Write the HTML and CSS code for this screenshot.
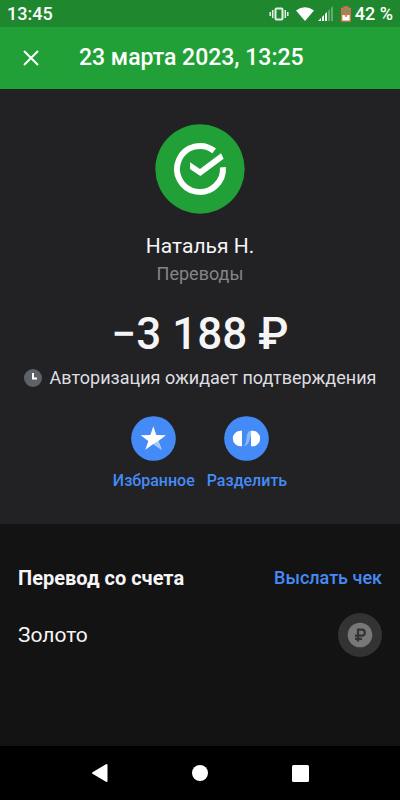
FILE: index.html
```html
<!DOCTYPE html>
<html lang="ru">
<head>
<meta charset="utf-8">
<meta name="viewport" content="width=device-width, initial-scale=1">
<title>23 марта 2023, 13:25</title>
<link rel="stylesheet" href="styles.css">
</head>
<body>
<div class="status">
  <span>13:45</span>
  <div class="status-icons">
    <svg width="20" height="16" viewBox="0 0 20 16" fill="none" stroke="#e6f3e8" stroke-width="1.5"><rect x="6.5" y="2.5" width="7" height="11" rx="1" stroke-width="2"/><path d="M3.7 4v8M16.3 4v8M1.2 6v4M18.8 6v4"/></svg>
    <svg class="wifi" width="18" height="14" viewBox="0 0 18 14"><path d="M0 3.5Q9-3 18 3.5L9 14Z" fill="#fff"/></svg>
    <svg class="signal" width="16" height="16" viewBox="0 0 16 16" fill="#fff"><path d="M0 15l3-3v3zM4 15v-4l2-2v6zM7 15V8l2-2v9z"/><path d="M10 15V5l2-2v12zM13 15V2l2-2v15z" opacity=".3"/></svg>
    <svg class="battery" width="10" height="16" viewBox="0 0 10 16"><path d="M3 .8h4v1.500h2.300v12.900H.7V2.300H3z" fill="#81906a" stroke="#e8683f" stroke-width="1.3"/><path d="M1.400 9h7.200v5.500H1.400z" fill="#fff"/><path d="M5 6v5M2.800 8.500h4.400" stroke="#e8683f" stroke-width="1.5"/></svg>
    <span>42 %</span>
  </div>
</div>
<header class="header">
  <button class="close" aria-label="Закрыть"><svg width="16" height="16" viewBox="0 0 16 16"><path d="M1 1l14 14M15 1L1 15" stroke="#fff" stroke-width="2"/></svg></button>
  <h1>23 марта 2023, 13:25</h1>
</header>
<main>
  <section class="hero">
    <svg class="logo" width="90" height="90" viewBox="30 26 270 270"><circle cx="165" cy="161" r="134" fill="#22a038"/><path d="M233.800 156A69 69 0 1 1 207.500 106.600" fill="none" stroke="#fff" stroke-width="18"/><path d="M135 141L165 161L228 114L236 130L166 182L135 161Z" fill="#fff"/></svg>
    <h2>Наталья Н.</h2>
    <p class="category">Переводы</p>
    <p class="amount">−3 188 ₽</p>
    <p class="state"><svg width="18" height="18" viewBox="0 0 18 18"><circle cx="9" cy="9" r="9" fill="#5e6166"/><path d="M9 4v5.500h4" fill="none" stroke="#fff" stroke-width="2"/></svg>Авторизация ожидает подтверждения</p>
    <div class="actions">
      <button class="action">
        <svg width="45" height="45" viewBox="0 0 135 135"><circle cx="67.500" cy="67.500" r="67" fill="#458bf7"/><path d="M67 31L76 57L105 58L82 75L92 101L67 84L43 101L52 75L29 58L58 57Z" fill="#fff"/><path d="M67 84L82 75L92 101Z" fill="#a2c6fc"/></svg>
        <span>Избранное</span>
      </button>
      <button class="action">
        <svg width="45" height="45" viewBox="0 0 135 135"><circle cx="67.500" cy="67.500" r="67" fill="#458bf7"/><path d="M54 91C76 90 59 44 81 44V60C76 67 78 91 54 91Z" fill="#8bb9fb"/><path d="M54 44V91H50A23.500 23.500 0 0 1 50 44ZM81 44V91H85A23.500 23.500 0 0 0 85 44Z" fill="#fff"/></svg>
        <span>Разделить</span>
      </button>
    </div>
  </section>
  <section class="source">
    <div class="row heading"><h3>Перевод со счета</h3><a href="#receipt">Выслать чек</a></div>
    <div class="row account"><span>Золото</span>
      <svg width="44" height="44" viewBox="0 0 44 44"><circle cx="22" cy="22" r="22" fill="#333"/><circle cx="22" cy="22" r="12.300" fill="#777"/><path d="M20 28.500V16.700h3.800a3 3 0 0 1 0 6H17M17 25.900h7" fill="none" stroke="#333" stroke-width="2.200"/></svg>
    </div>
  </section>
</main>
<nav class="nav">
  <button aria-label="Назад"><svg width="18" height="20" viewBox="0 0 18 20"><path d="M2 10L15.500 2V18Z" fill="#fff" stroke="#fff" stroke-width="2" stroke-linejoin="round"/></svg></button>
  <button aria-label="Домой"><svg width="16" height="16" viewBox="0 0 16 16"><circle cx="8" cy="8" r="8" fill="#fff"/></svg></button>
  <button aria-label="Недавние"><svg width="17" height="17" viewBox="0 0 17 17"><rect width="17" height="17" rx="1.500" fill="#fff"/></svg></button>
</nav>
</body>
</html>
```
FILE: styles.css
```css
* { box-sizing: border-box; margin: 0; }
body {
  display: flex;
  flex-direction: column;
  min-height: 100vh;
  background: #131313;
  color: #f5f5f7;
  font-family: Roboto, "Liberation Sans", sans-serif;
}
svg { display: block; flex: none; }
button {
  border: 0;
  padding: 0;
  background: none;
  color: inherit;
  font: inherit;
}
.status {
  display: flex;
  justify-content: space-between;
  align-items: center;
  padding: 0 7px;
  background: #1f882f;
  color: #fff;
  font-size: 18px;
  font-weight: 500;
  line-height: 27px;
}
.status-icons { display: flex; align-items: center; }
.wifi { margin-left: 7px; }
.signal { margin-left: 4px; }
.battery { margin: 0 4px 0 7px; }
.header {
  display: flex;
  align-items: center;
  gap: 40px;
  padding: 16px 24px 16px 23px;
  background: #22a038;
}
.header h1 {
  color: #fff;
  font-size: 23px;
  font-weight: 500;
  line-height: 30px;
}
.hero {
  display: flex;
  flex-direction: column;
  align-items: center;
  padding: 35px 16px 31px;
  background: #222224;
  text-align: center;
}
.hero h2 {
  margin-top: 18px;
  font-size: 21px;
  font-weight: 400;
  line-height: 28px;
}
.category {
  margin-top: 2px;
  color: #858587;
  font-size: 18px;
  line-height: 24px;
}
.amount {
  margin-top: 22px;
  font-size: 44px;
  font-weight: 500;
  line-height: 52px;
}
.state {
  display: flex;
  align-items: center;
  gap: 8px;
  margin-top: 6px;
  color: #dedee0;
  font-size: 18px;
  line-height: 24px;
}
.actions { display: flex; gap: 12px; margin-top: 26px; }
.action {
  display: flex;
  flex-direction: column;
  align-items: center;
  gap: 8px;
  color: #458bf7;
  font-size: 16px;
  font-weight: 500;
  line-height: 24px;
}
.source { padding: 40px 18px 24px; }
.row {
  display: flex;
  justify-content: space-between;
  align-items: center;
}
.heading { line-height: 28px; }
.heading h3 { font-size: 20px; font-weight: 700; }
.heading a {
  color: #458bf7;
  font-size: 18px;
  font-weight: 500;
  text-decoration: none;
}
.account { margin-top: 21px; font-size: 21px; }
.nav {
  display: flex;
  justify-content: center;
  margin-top: auto;
  background: #000;
}
.nav button {
  display: flex;
  flex: 0 1 25%;
  align-items: center;
  justify-content: center;
  height: 54px;
}
```
